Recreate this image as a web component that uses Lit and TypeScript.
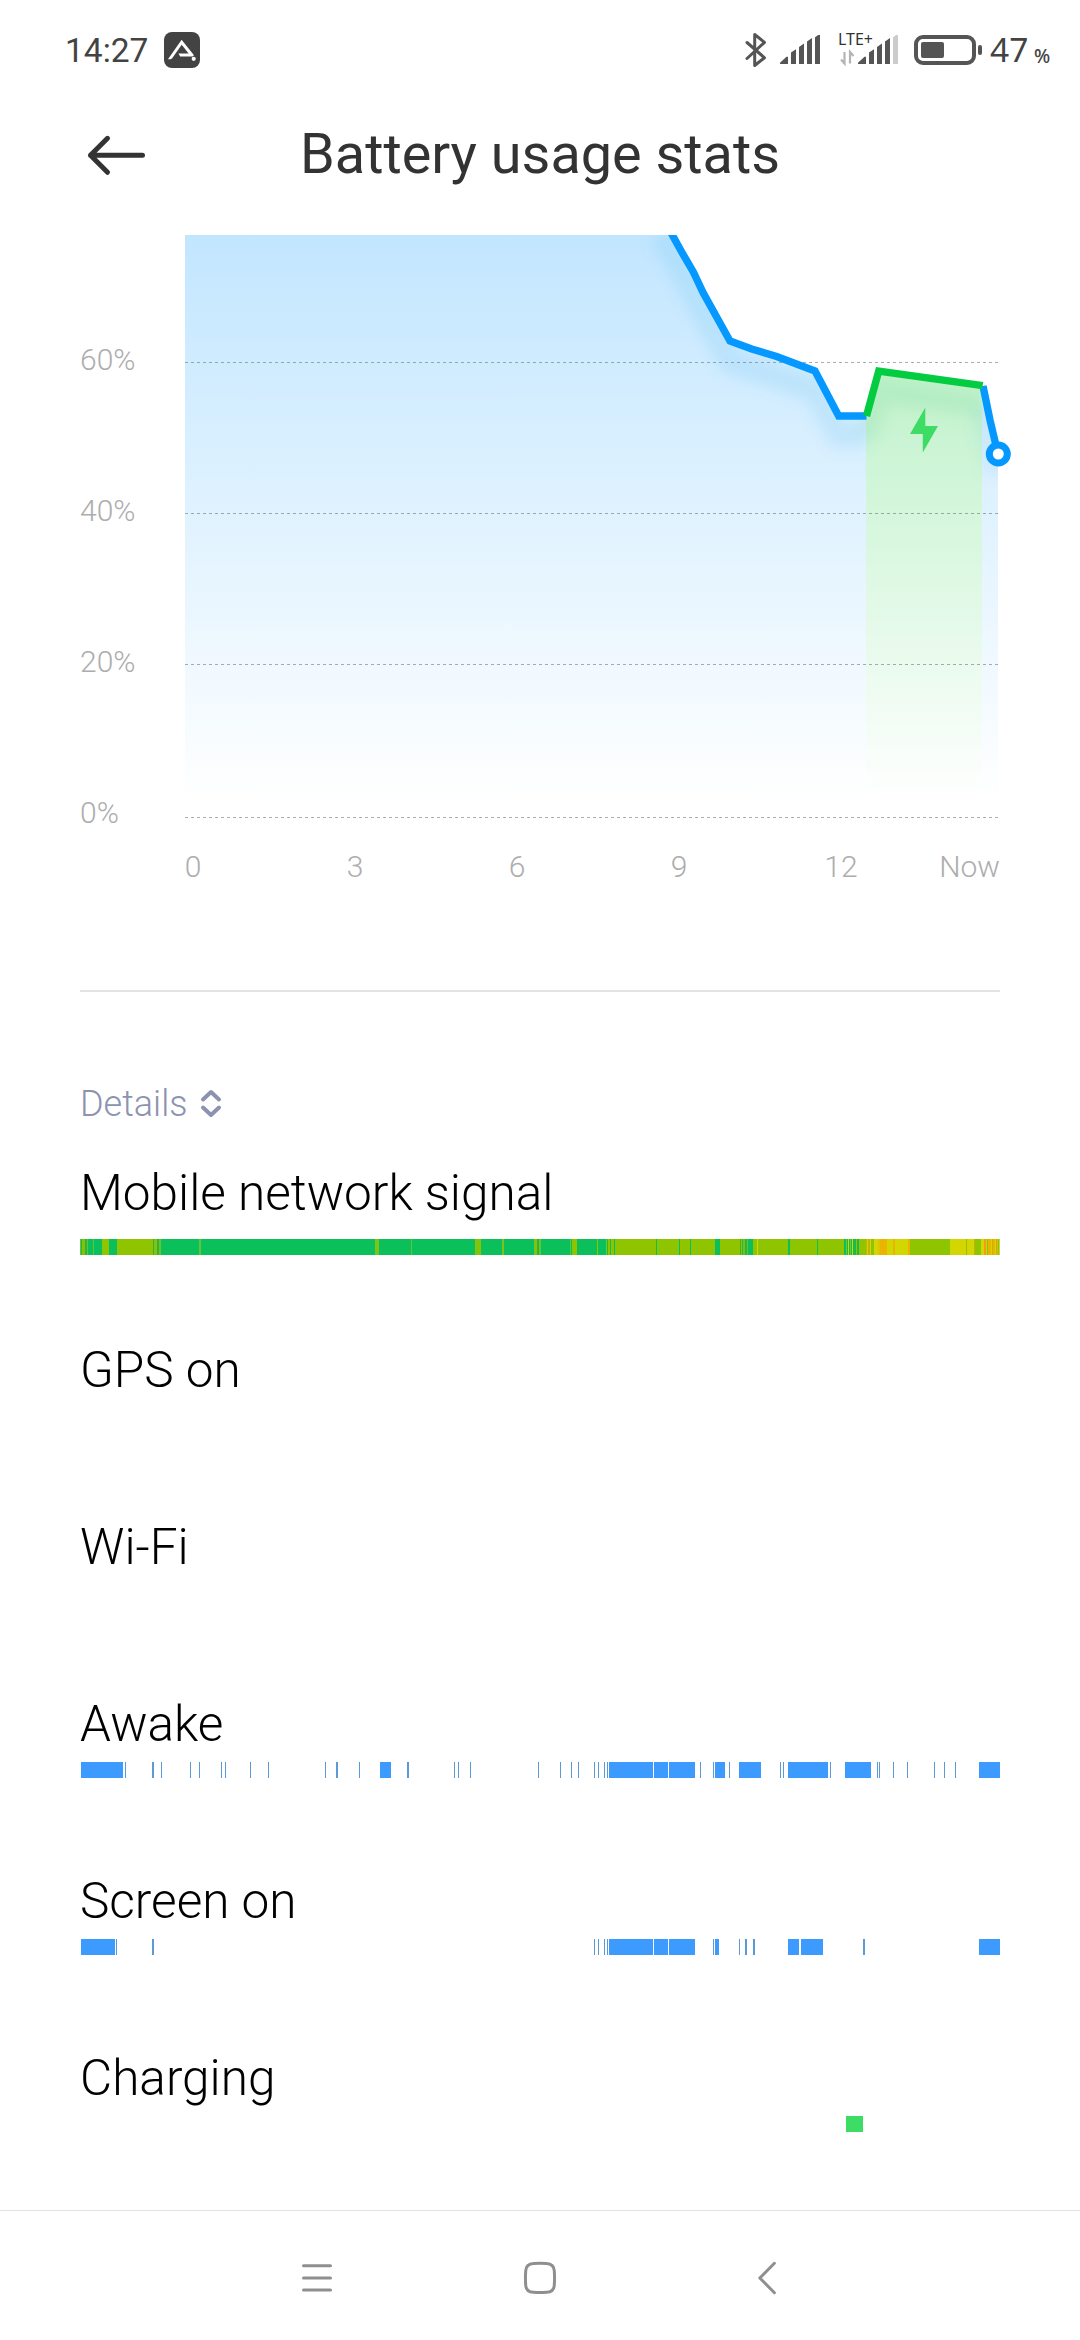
import { LitElement, html, svg, css } from "lit";
import { customElement, property } from "lit/decorators.js";

type Segment = [start: number, end: number, color?: string];

const BLUE = "#3d9bff";
const THIN_BLUE = "#5a9ad6";
const G = "#0bbf5b";
const O = "#8fc400";
const L = "#5cc832";
const D = "#3fae28";
const Y = "#d3d600";
const A = "#ebb400";
const M = "#c4b400";
const R = "#f59a1e";

const SIGNAL: Segment[] = [
  [0, 920, G],
  [0, 1, L], [1, 2, D], [2, 5, "#76c41a"], [5, 7, D], [7, 8, L], [13, 14, L],
  [22, 29, O], [37, 73, O], [73, 74, D], [74, 77, "#7cc41a"], [77, 79, D], [79, 81, L],
  [119, 121, L], [295, 299, "#7cc41a"], [331, 332, L], [395, 401, "#82c40c"],
  [422, 424, "#7cc41a"], [454, 457, "#7cc41a"], [457, 459, D], [459, 461, L],
  [490, 491, L], [492, 497, O], [517, 518, O], [526, 527, O], [528, 530, O],
  [531, 534, O], [535, 786, O],
  [576, 577, G], [599, 600, G], [610, 611, G], [635, 640, G],
  [660, 661, D], [662, 663, D], [663, 665, L], [665, 667, D], [667, 668, L], [668, 673, G],
  [677, 678, Y], [708, 710, G], [737, 738, G],
  [764, 766, G], [767, 768, G], [768, 769, Y], [769, 770, G], [771, 772, G], [772, 773, Y],
  [773, 776, G], [777, 778, D], [778, 779, G],
  [786, 787, M], [787, 788, Y], [788, 790, M], [790, 791, Y], [791, 794, O],
  [794, 798, Y], [798, 800, "#e0c400"], [800, 807, A], [807, 813, Y], [813, 815, A],
  [815, 828, Y], [828, 830, A], [830, 870, O],
  [870, 886, Y], [886, 887, O], [887, 894, Y], [894, 895, M], [895, 901, O],
  [901, 904, Y], [904, 906, R], [906, 907, Y], [907, 908, O], [908, 911, A], [911, 912, Y],
  [912, 913, M], [913, 915, A], [915, 916, Y], [916, 917, M], [917, 918, A], [918, 919, O],
  [919, 920, "#b8d860"],
];

const ticks = (...xs: number[]): Segment[] => xs.map((x) => [x, x + 1]);

const AWAKE: Segment[] = [
  [1, 43], [72, 74], [256, 258], [300, 311], [327, 329], [529, 573], [574, 588], [589, 615],
  [635, 645], [659, 681], [708, 748], [765, 791], [899, 920],
  ...ticks(45, 81, 110, 119, 141, 145, 170, 188, 245, 279, 374, 378, 390, 458, 480, 491, 498,
    514, 518, 524, 527, 620, 633, 649, 700, 703, 750, 797, 799, 813, 827, 854, 864, 875),
];

const SCREEN: Segment[] = [
  [1, 35], [72, 74], [529, 573], [574, 588], [589, 615], [635, 639], [665, 667], [673, 675],
  [708, 719], [721, 743], [783, 785], [899, 920],
  ...ticks(36, 514, 518, 524, 527, 633, 659),
];

const ROWS: { label: string; segments: Segment[]; kind?: string }[] = [
  { label: "Mobile network signal", segments: SIGNAL, kind: "signal" },
  { label: "GPS on", segments: [] },
  { label: "Wi-Fi", segments: [] },
  { label: "Awake", segments: AWAKE },
  { label: "Screen on", segments: SCREEN },
  { label: "Charging", segments: [[766, 783, "#3ddc64"]], kind: "last" },
];

@customElement("usage-strip")
class UsageStrip extends LitElement {
  @property({ attribute: false }) segments: Segment[] = [];

  static styles = css`
    :host { display: block; height: 16px; }
    svg { display: block; }
  `;

  render() {
    return html`<svg width="920" height="16" shape-rendering="crispEdges">
      ${this.segments.map(([a, b, c]) => svg`<rect x=${a} y="0" width=${b - a} height="16" fill=${c ?? (b - a < 3 ? THIN_BLUE : BLUE)}></rect>`)}
    </svg>`;
  }
}

@customElement("battery-chart")
class BatteryChart extends LitElement {
  static styles = css`
    :host { display: block; }
    svg { display: block; }
    .axis { font: 300 30px Roboto, "Liberation Sans", sans-serif; fill: #adadad; }
    .end { text-anchor: end; }
    .mid { text-anchor: middle; }
  `;

  render() {
    const before = "660,214 672.3,235 681.7,252 693.3,272 703.3,293 730,341 751.7,349 776.7,356.5 815,371 838.7,416 866.5,416";
    const charge = "866.5,416 878.7,371 982.7,385.7";
    const after = "983,386 990,420 998,454";
    const area = `185,200 ${before} ${charge} ${after} 998,812 185,812`;
    const grid = [362, 513, 664, 817];
    const levels: [string, number][] = [["60%", 370], ["40%", 521], ["20%", 672], ["0%", 823]];
    return html`<svg width="1080" height="755" viewBox="0 235 1080 755">
      <defs>
        <linearGradient id="sky" gradientUnits="userSpaceOnUse" x1="0" y1="235" x2="0" y2="803">
          <stop offset="0" stop-color="#c2e6ff"></stop><stop offset="1" stop-color="#ffffff"></stop>
        </linearGradient>
        <linearGradient id="leaf" gradientUnits="userSpaceOnUse" x1="0" y1="371" x2="0" y2="803">
          <stop offset="0" stop-color="#c0f2cb"></stop><stop offset="1" stop-color="#ffffff"></stop>
        </linearGradient>
        <filter id="soft" filterUnits="userSpaceOnUse" x="600" y="180" width="440" height="360">
          <feGaussianBlur stdDeviation="7"></feGaussianBlur>
        </filter>
        <clipPath id="under"><polygon points=${area}></polygon></clipPath>
      </defs>
      <polygon points=${area} fill="url(#sky)"></polygon>
      <polygon points="866,416 878.7,371 982,386 982,803 866,803" fill="url(#leaf)"></polygon>
      <g clip-path="url(#under)">
        <g filter="url(#soft)" transform="translate(0 20)" fill="none" stroke-width="24">
          <polyline points=${before} stroke="#1e8fd6" stroke-opacity="0.1"></polyline>
          <polyline points=${charge} stroke="#1ea84a" stroke-opacity="0.08"></polyline>
          <polyline points=${after} stroke="#1e8fd6" stroke-opacity="0.07"></polyline>
        </g>
      </g>
      ${grid.map((y) => svg`<line x1="185" x2="998" y1=${y + 0.5} y2=${y + 0.5} stroke="#5a6470" stroke-opacity="0.52" stroke-dasharray="3 3" shape-rendering="crispEdges"></line>`)}
      <g fill="none" stroke-width="7.4">
        <polyline points=${before} stroke="#0598ff"></polyline>
        <polyline points=${after} stroke="#0598ff"></polyline>
        <polyline points=${charge} stroke="#04cc41"></polyline>
      </g>
      <circle cx="998.3" cy="454" r="9" fill="#fff" stroke="#0598ff" stroke-width="7"></circle>
      <path d="M925.3 407.5 910 434h12.8v18.5L938 426h-12.7z" fill="#3ddc64"></path>
      ${levels.map(([t, y]) => svg`<text class="axis" x="80" y=${y}>${t}</text>`)}
      ${["0", "3", "6", "9", "12"].map((t, i) => svg`<text class="axis mid" x=${193 + i * 162} y="877">${t}</text>`)}
      <text class="axis end" x="1000" y="877">Now</text>
    </svg>`;
  }
}

@customElement("app-root")
class AppRoot extends LitElement {
  static styles = css`
    :host {
      display: block;
      font-family: Roboto, "Liberation Sans", sans-serif;
      color: #000;
      background: #fff;
    }
    svg { display: block; flex: none; }
    .page { display: flex; flex-direction: column; width: 1080px; height: 2340px; overflow: hidden; }
    .page > * { flex-shrink: 0; }
    .status { display: flex; align-items: flex-start; height: 100px; color: #434343; }
    .clock { margin: 31px 0 0 65px; width: 99px; font-size: 33.5px; line-height: 40px; white-space: nowrap; }
    .app { margin-top: 32px; }
    .tray { margin: 0 0 0 auto; display: flex; padding-right: 30px; }
    .lte { font: 16px "Noto Sans", sans-serif; fill: #333; }
    .pct { font: 33.5px "Noto Sans", sans-serif; fill: #434343; }
    .sign { font: 500 19px "Noto Sans", sans-serif; fill: #434343; }
    .bar { display: grid; grid-template-columns: 160px 1fr 160px; height: 135px; }
    .back { margin: 33px 0 0 84px; }
    .title { margin: 0; padding-top: 19px; font-size: 55.8px; font-weight: 400; line-height: 70px; color: #333; text-align: center; white-space: nowrap; }
    .rule { height: 2px; margin: 0 80px; background: #e3e3e3; }
    .details { display: flex; align-items: center; gap: 12px; margin: 82px 0 0 80px; height: 60px; padding-bottom: 29px; font-size: 36px; font-weight: 300; line-height: 60px; color: #8c93b0; }
    .rows { display: flex; flex-direction: column; padding: 0 80px; }
    .row { height: 177px; }
    .last { height: 162px; }
    .name { font-size: 49.5px; font-weight: 300; line-height: 60px; margin-bottom: 8px; white-space: nowrap; }
    .signal .name { margin-bottom: 16px; }
    .nav { display: flex; height: 129px; border-top: 1px solid #e2e2e2; background: #fff; }
  `;

  private wedge(x: number, dim = false) {
    return svg`<g transform="translate(${x} 35)">
      <path d="M0 29v-1.2L6.5 21.7H8V29zM11 29V17.6l5-3.4V29zM19 29V12l5-3.4V29zM27 29V6.5l5-3.4V29z"></path>
      <path d="M35 29V2.2L38.2 0H40V29z" opacity=${dim ? 0.3 : 1}></path>
    </g>`;
  }

  render() {
    return html`<main class="page">
      <div class="status">
        <span class="clock">14:27</span>
        <svg class="app" width="36" height="36" viewBox="0 0 36 36">
          <rect width="36" height="36" rx="8" fill="#434343"></rect>
          <path d="M4 27.2 17.6 7.8 30 23.2 28.4 24.4H16.2L14.4 21.6H24.6L17.7 12.8 8 26.4 6.4 27.2z" fill="#fff"></path>
          <circle cx="29.7" cy="26.8" r="2.1" fill="#fff"></circle>
        </svg>
        <div class="tray">
          <svg width="310" height="100" viewBox="740 0 310 100" fill="#555">
            <path d="M747 42.5 764.5 57.8 754.7 65.5V34.5L764.5 42.3 747 58.5" fill="none" stroke="#555" stroke-width="3" stroke-linejoin="round" stroke-linecap="round"></path>
            ${this.wedge(780)}
            <text class="lte" x="838" y="45">LTE+</text>
            <path d="M844.5 52v11.5L841 59.5M850 63.5V52L853.5 56" fill="none" stroke="#b4b4b4" stroke-width="2.2"></path>
            ${this.wedge(858, true)}
            <rect x="916" y="37" width="58" height="26" rx="7" fill="none" stroke="#555" stroke-width="4"></rect>
            <rect x="921" y="42" width="23" height="16" rx="2"></rect>
            <rect x="978" y="45" width="4" height="10" rx="2"></rect>
            <text class="pct" x="990" y="62.3">47</text>
            <text class="sign" x="1034" y="62.8">%</text>
          </svg>
        </div>
      </div>
      <header class="bar">
        <svg class="back" width="64" height="46" viewBox="84 133 64 46" fill="none" stroke="#333" stroke-width="5" stroke-linecap="round" stroke-linejoin="round">
          <path d="M142.5 155.3H90.5M107.5 138.3 90.5 155.3 107.5 172.3"></path>
        </svg>
        <h1 class="title">Battery usage stats</h1>
      </header>
      <battery-chart></battery-chart>
      <div class="rule"></div>
      <div class="details">
        <span>Details</span>
        <svg width="22" height="32" viewBox="0 0 22 32" fill="none" stroke="#8c93b0" stroke-width="4" stroke-linecap="round" stroke-linejoin="round">
          <path d="M3 11.5 11 4 19 11.5M3 19.5 11 27 19 19.5"></path>
        </svg>
      </div>
      <section class="rows">
        ${ROWS.map((r) => html`<div class="row ${r.kind ?? ""}">
          <div class="name">${r.label}</div>
          <usage-strip .segments=${r.segments}></usage-strip>
        </div>`)}
      </section>
      <nav class="nav">
        <svg width="1080" height="129" viewBox="0 2211 1080 129" fill="none" stroke="#8f8f8f" stroke-width="3" stroke-linecap="round" stroke-linejoin="round">
          <path d="M303.5 2265.8h27M303.5 2278h27M303.5 2290h27"></path>
          <path d="M533.5 2263.4Q540 2263 546.5 2263.4 554 2263.7 554.3 2271 554.8 2278 554.3 2285 554 2292 546.5 2292.3 540 2292.8 533.5 2292.3 526 2292 525.7 2285 525.2 2278 525.7 2271 526 2263.7 533.5 2263.4z"></path>
          <path d="M774.4 2263.3 759.8 2278 774.4 2292.7"></path>
        </svg>
      </nav>
    </main>`;
  }
}
